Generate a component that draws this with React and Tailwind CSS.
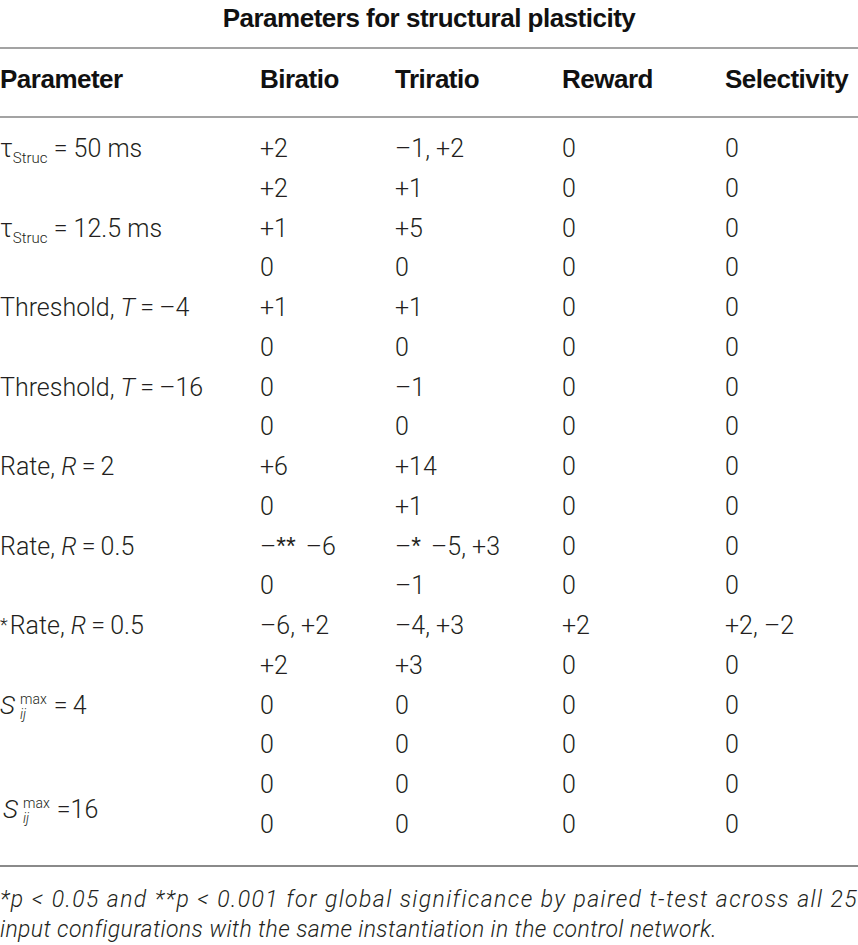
import React from "react";

const cols = "grid grid-cols-[260px_135px_167px_163px_1fr]";
const head = "font-['Liberation_Sans',sans-serif] font-bold text-[26px] tracking-[-0.5px] text-[#111]";

const Tau = ({ value }) => (
  <span>
    τ<span className="relative top-[6px] text-[15px] leading-none">Struc</span> = {value}
  </span>
);

const Smax = ({ value, tight }) => (
  <span className={tight ? "ml-[3px]" : ""}>
    <span className="italic text-[26px]">S</span>
    <span className="inline-block align-middle text-[14px] leading-[15px] ml-[5px]">
      <span className="block">max</span>
      <span className="block italic">ij</span>
    </span>
    <span className="ml-[7px]">={tight ? "" : "\u2009"}{value}</span>
  </span>
);

const Star = ({ children }) => (
  <span className="font-['Liberation_Sans',sans-serif] font-normal text-[25px]">{children}</span>
);

const Sig = ({ stars, value }) => (
  <span>
    –<Star>{stars}</Star>
    <span className="ml-[10px]">{value}</span>
  </span>
);

const groups = [
  {
    label: <Tau value="50 ms" />,
    rows: [["+2", "–1, +2", "0", "0"], ["+2", "+1", "0", "0"]],
  },
  {
    label: <Tau value="12.5 ms" />,
    rows: [["+1", "+5", "0", "0"], ["0", "0", "0", "0"]],
  },
  {
    label: <span>Threshold, <i>T</i>{"\u2009=\u2009"}–4</span>,
    rows: [["+1", "+1", "0", "0"], ["0", "0", "0", "0"]],
  },
  {
    label: <span>Threshold, <i>T</i>{"\u2009=\u2009"}–16</span>,
    rows: [["0", "–1", "0", "0"], ["0", "0", "0", "0"]],
  },
  {
    label: <span>Rate, <i>R</i>{"\u2009=\u2009"}2</span>,
    rows: [["+6", "+14", "0", "0"], ["0", "+1", "0", "0"]],
  },
  {
    label: <span>Rate, <i>R</i>{"\u2009=\u2009"}0.5</span>,
    rows: [
      [<Sig stars="**" value="–6" />, <Sig stars="*" value="–5, +3" />, "0", "0"],
      ["0", "–1", "0", "0"],
    ],
  },
  {
    label: (
      <span>
        <span className="relative -top-[3px] text-[18px] mr-[2px]">*</span>Rate, <i>R</i>{"\u2009=\u2009"}0.5
      </span>
    ),
    rows: [["–6, +2", "–4, +3", "+2", "+2, –2"], ["+2", "+3", "0", "0"]],
  },
  {
    label: <Smax value="4" />,
    rows: [["0", "0", "0", "0"], ["0", "0", "0", "0"]],
  },
  {
    label: <Smax value="16" tight />,
    offset: true,
    rows: [["0", "0", "0", "0"], ["0", "0", "0", "0"]],
  },
];

const Group = ({ group }) => (
  <div className={`${cols} grid-rows-[39.75px_39.75px]`}>
    <div
      className={
        group.offset
          ? "row-span-2 self-center mt-[10px] leading-[39.75px] whitespace-nowrap"
          : "row-span-2 h-[39.75px] leading-[39.75px] whitespace-nowrap"
      }
    >
      {group.label}
    </div>
    {group.rows.map((row, i) =>
      row.map((cell, j) => (
        <div
          key={`${i}-${j}`}
          className="h-[39.75px] leading-[39.75px] whitespace-nowrap"
          style={{ gridRow: i + 1, gridColumn: j + 2 }}
        >
          {cell}
        </div>
      ))
    )}
  </div>
);

const App = () => {
  return (
    <div className="w-[858px] min-h-[945px] bg-white text-[#231f20] font-['Roboto',sans-serif] font-light text-[25px]">
      <h1 className={`${head} text-center pt-[2px] leading-[32px]`}>
        Parameters for structural plasticity
      </h1>

      <div className="mt-[13px] h-[2px] bg-[#a3a3a3]" />

      <div className={`${cols} ${head} pt-[16px] pb-[23px] leading-[28px]`}>
        <div>Parameter</div>
        <div>Biratio</div>
        <div>Triratio</div>
        <div>Reward</div>
        <div>Selectivity</div>
      </div>

      <div className="h-[2px] bg-[#a3a3a3]" />

      <div className="pt-[11px] pb-[20px]">
        {groups.map((g, i) => (
          <Group key={i} group={g} />
        ))}
      </div>

      <div className="h-[2px] bg-[#8a8a8a]" />

      <div className="pt-[18px] text-[23px] leading-[30px] italic">
        <p className="text-justify [text-align-last:justify] tracking-[1.4px]">
          *p &lt; 0.05 and **p &lt; 0.001 for global significance by paired t-test across all 25
        </p>
        <p className="tracking-[0.4px]">input configurations with the same instantiation in the control network.</p>
      </div>
    </div>
  );
};

export default App;
